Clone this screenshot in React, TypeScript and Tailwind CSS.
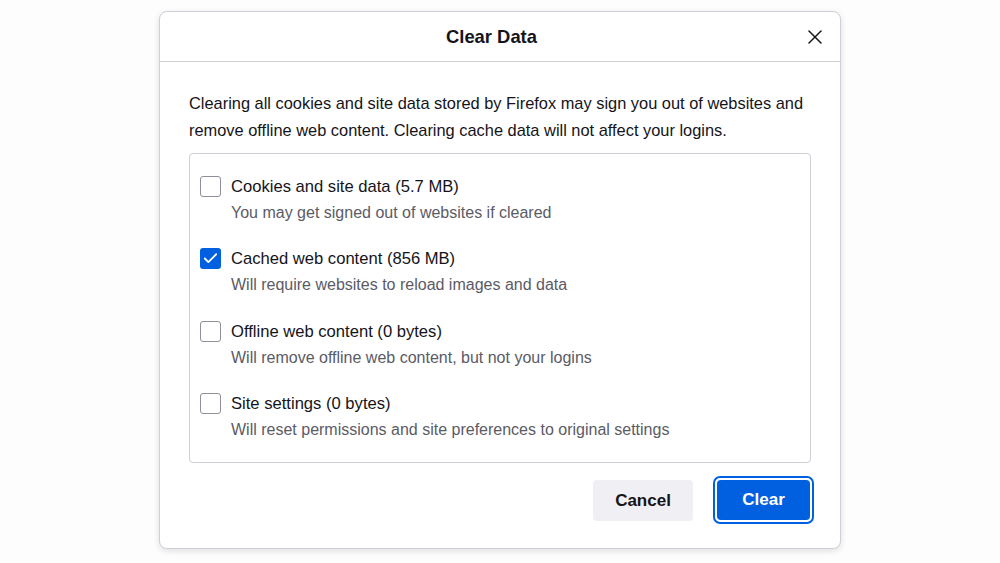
import { Check, X } from 'lucide-react'

const items = [
  { label: 'Cookies and site data (5.7 MB)', hint: 'You may get signed out of websites if cleared', checked: false },
  { label: 'Cached web content (856 MB)', hint: 'Will require websites to reload images and data', checked: true },
  { label: 'Offline web content (0 bytes)', hint: 'Will remove offline web content, but not your logins', checked: false },
  { label: 'Site settings (0 bytes)', hint: 'Will reset permissions and site preferences to original settings', checked: false },
]

export default function App() {
  return (
    <main
      className="w-[1000px] h-[563px] bg-[#fdfdfd] pt-[11px] pl-[159px]"
      style={{ fontFamily: '"Liberation Sans", Arial, sans-serif' }}
    >
      <div className="w-[682px] h-[538px] bg-white border border-[#cfcfd8] rounded-[8px] shadow-[0_2px_6px_rgba(0,0,0,0.12)] flex flex-col">
        <div className="h-[50px] border-b border-[#cfcfd8] flex items-center justify-center relative">
          <h1 className="text-[18.4px] font-bold text-[#15141a] mt-[1px] mr-[17px]">Clear Data</h1>
          <button className="absolute right-[13px] top-[13px] text-[#15141a]" type="button">
            <X size={24} strokeWidth={1.5} />
          </button>
        </div>
        <div className="px-[29px] pt-[28px]">
          <p className="text-[16.4px] leading-[27px] text-[#15141a]">
            Clearing all cookies and site data stored by Firefox may sign you out of websites and
            remove offline web content. Clearing cache data will not affect your logins.
          </p>
          <div className="mt-[9px] w-[622px] h-[310px] border border-[#cfcfd8] rounded-[4px] pt-[22px] pl-[10px] flex flex-col gap-[25.4px]">
            {items.map((item) => (
              <div key={item.label} className="flex gap-[10px]">
                <div
                  className={
                    item.checked
                      ? 'w-[21px] h-[21px] shrink-0 rounded-[3px] bg-[#0060df] flex items-center justify-center text-white'
                      : 'w-[21px] h-[21px] shrink-0 rounded-[3px] border border-[#8f8f9d] bg-white'
                  }
                >
                  {item.checked && <Check size={17} strokeWidth={2.5} />}
                </div>
                <div className="flex flex-col">
                  <span className="text-[16.6px] leading-[21px] text-[#15141a]">{item.label}</span>
                  <span className="text-[16px] leading-[20px] mt-[6px] text-[#5b5b66]">{item.hint}</span>
                </div>
              </div>
            ))}
          </div>
          <div className="flex justify-end items-start gap-[20px] mt-[13px] -mr-[3px]">
            <button
              type="button"
              className="w-[100px] h-[41px] mt-[4px] shrink-0 rounded-[4px] bg-[#f0f0f4] text-[17px] font-bold text-[#15141a]"
            >
              Cancel
            </button>
            <div className="w-[101px] h-[48px] shrink-0 rounded-[7px] border-2 border-[#0060df] flex items-center justify-center">
              <button
                type="button"
                className="w-[93px] h-[40px] rounded-[4px] bg-[#0060df] text-[17px] font-bold text-white"
              >
                Clear
              </button>
            </div>
          </div>
        </div>
      </div>
    </main>
  )
}
